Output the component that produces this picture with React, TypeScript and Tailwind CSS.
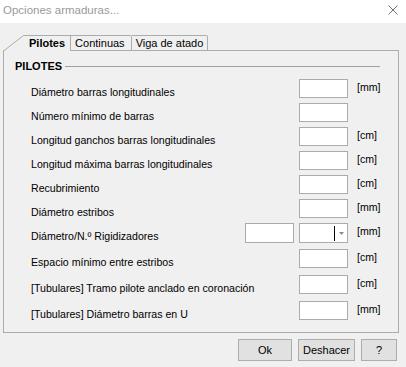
import React from 'react';

interface Row {
  label: string;
  unit?: string;
  combo?: boolean;
  tall?: boolean;
}

const ROWS: Row[] = [
  { label: 'Diámetro barras longitudinales', unit: '[mm]' },
  { label: 'Número mínimo de barras' },
  { label: 'Longitud ganchos barras longitudinales', unit: '[cm]' },
  { label: 'Longitud máxima barras longitudinales', unit: '[cm]' },
  { label: 'Recubrimiento', unit: '[cm]' },
  { label: 'Diámetro estribos', unit: '[mm]' },
  { label: 'Diámetro/N.º Rigidizadores', unit: '[mm]', combo: true, tall: true },
  { label: 'Espacio mínimo entre estribos', unit: '[cm]', tall: true },
  { label: '[Tubulares] Tramo pilote anclado en coronación', unit: '[cm]', tall: true },
  { label: '[Tubulares] Diámetro barras en U', unit: '[mm]', tall: true },
];

function Field() {
  return <div className="w-[49px] h-[19px] border border-[#ababab] bg-white shrink-0" />;
}

function Combo() {
  return (
    <div className="relative w-[49px] h-[20px] border border-[#ababab] bg-white shrink-0">
      <div className="absolute left-[34px] top-[2px] bottom-[1px] w-px bg-black" />
      <svg className="absolute left-[39px] top-[8px]" width="5" height="3" viewBox="0 0 5 3">
        <polygon points="0,0 5,0 2.5,3" fill="#8a8a8a" />
      </svg>
    </div>
  );
}

export default function App() {
  return (
    <div className="w-[406px] h-[367px] bg-[#f0f0f0] text-[11px] text-black overflow-hidden"
      style={{ fontFamily: '"Liberation Sans", Arial, sans-serif' }}>
      {/* Title bar */}
      <div className="h-[23px] bg-white flex items-center justify-between pl-[3px] pr-[8px]">
        <span className="text-[11.5px] text-[#9a9a9a] leading-[14px] -mt-[3px]">Opciones armaduras...</span>
        <svg width="10" height="10" viewBox="0 0 10 10" className="-mt-[3px]">
          <path d="M0.5 0.5 L9.5 9.5 M9.5 0.5 L0.5 9.5" stroke="#707070" strokeWidth="1" />
        </svg>
      </div>

      {/* Tabs */}
      <div className="pt-[12px] pl-[3px]">
        <div className="relative z-10 flex items-end h-[16px] -mb-px">
          <svg width="21" height="16" viewBox="0 0 21 16" className="shrink-0">
            <polygon points="0,16 21,0 21,16" fill="#f0f0f0" />
            <path d="M0.5 16 L20.5 0.5 L21 0.5" stroke="#acacac" strokeWidth="1" fill="none" />
          </svg>
          <div className="h-[16px] border-t border-r border-[#acacac] bg-[#f0f0f0] pl-[5px] pr-[5px] font-bold leading-[14px]">
            Pilotes
          </div>
          <div className="h-[16px] border-t border-r border-b border-[#acacac] rounded-tr-[2px] pl-[4px] pr-[6px] leading-[14px]">
            Continuas
          </div>
          <div className="h-[16px] border-t border-r border-b border-[#acacac] rounded-tr-[2px] pl-[4px] pr-[4px] leading-[14px]">
            Viga de atado
          </div>
        </div>

        {/* Pane */}
        <div className="w-[396px] h-[283px] border border-[#acacac]">
          <div className="flex items-center mt-[9px] pl-[11px] pr-[18px] h-[13px]">
            <span className="font-bold leading-[13px]">PILOTES</span>
            <div className="flex-1 h-px bg-[#a0a0a0] ml-[3px]" />
          </div>

          <div className="mt-[6px]">
            {ROWS.map((r) => (
              <div key={r.label} className={`flex items-start ${r.tall ? 'h-[26px]' : 'h-[24px]'}`}>
                <div className="flex-1 pl-[27px] pt-[6px] text-[10.6px] leading-[14px] whitespace-nowrap">{r.label}</div>
                {r.combo && (
                  <div className="mr-[5px]">
                    <div className="w-[49px] h-[20px] border border-[#ababab] bg-white" />
                  </div>
                )}
                {r.combo ? <Combo /> : <Field />}
                <div className="w-[50px] pl-[9px] pt-[1px] text-[10.6px] leading-[14px]">{r.unit ?? ''}</div>
              </div>
            ))}
          </div>
        </div>
      </div>

      {/* Buttons */}
      <div className="flex justify-end gap-[6px] pr-[9px] mt-[6px]">
        <button className="w-[54px] h-[22px] border border-[#adadad] bg-[#e1e1e1] leading-[20px]">Ok</button>
        <button className="w-[57px] h-[22px] border border-[#adadad] bg-[#e1e1e1] leading-[20px]">Deshacer</button>
        <button className="w-[36px] h-[22px] border border-[#adadad] bg-[#e1e1e1] leading-[20px]">?</button>
      </div>
    </div>
  );
}
